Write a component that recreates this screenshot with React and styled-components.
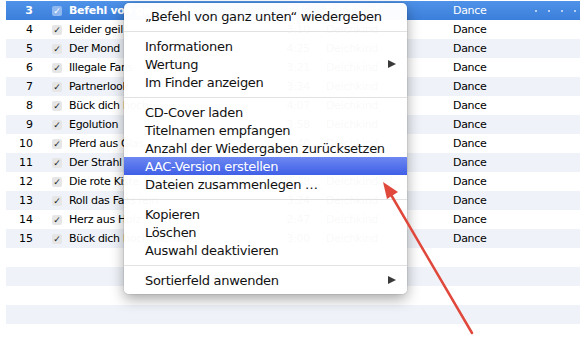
import styled, { createGlobalStyle } from "styled-components";

const GlobalStyle = createGlobalStyle`
  html, body {
    margin: 0;
    padding: 0;
    background: #ffffff;
  }
  body {
    font-family: "DejaVu Sans", "Liberation Sans", sans-serif;
  }
`;

const Screen = styled.div`
  position: relative;
  width: 580px;
  height: 343px;
  overflow: hidden;
  background: #ffffff;
`;

const Table = styled.div`
  display: flex;
  flex-direction: column;
  padding: 1px 0 0 6px;
`;

// Nummer | Haken | Titel | Zeit | Interpret | Genre
const Row = styled.div`
  display: grid;
  grid-template-columns: 27px 19px 10px 7px 200px 41px 16px 127px 1fr;
  align-items: center;
  height: 19px;
  font-size: 11px;
  letter-spacing: -0.3px;
  color: ${(p) => (p.$selected ? "#ffffff" : "#000000")};
  background: ${(p) =>
    p.$selected
      ? "linear-gradient(#4f92e8, #3b7fdb)"
      : p.$striped
      ? "#eff3f9"
      : "#ffffff"};
  white-space: nowrap;
`;

const Num = styled.div`
  grid-column: 1;
  text-align: right;
  letter-spacing: 0;
  font-weight: ${(p) => (p.$selected ? "bold" : "normal")};
`;

const Check = styled.div`
  grid-column: 3;
  width: 10px;
  height: 10px;
  border-radius: 2px;
  background: ${(p) => (p.$selected ? "#8fb8f0" : "#e6e6e6")};
  color: ${(p) => (p.$selected ? "#ffffff" : "#222222")};
  font-size: 9px;
  font-weight: bold;
  line-height: 10px;
  text-align: center;
  letter-spacing: 0;
`;

const Title = styled.div`
  grid-column: 5;
  overflow: hidden;
  font-weight: ${(p) => (p.$selected ? "bold" : "normal")};
`;

const Time = styled.div`
  grid-column: 6;
  text-align: right;
`;

const Artist = styled.div`
  grid-column: 8;
  overflow: hidden;
`;

const Genre = styled.div`
  grid-column: 9;
  display: flex;
  align-items: center;
  justify-content: space-between;
  padding-right: 4px;
`;

const Dots = styled.div`
  display: flex;
  gap: 11px;
`;

const Dot = styled.span`
  width: 2px;
  height: 2px;
  border-radius: 1px;
  background: rgba(255, 255, 255, 0.8);
`;

const Menu = styled.div`
  position: absolute;
  left: 124px;
  top: 3px;
  width: 283px;
  padding: 4px 0 5px;
  background: rgba(255, 255, 255, 0.975);
  border-radius: 5px;
  box-shadow: 0 5px 14px rgba(0, 0, 0, 0.35), 0 0 0 1px rgba(0, 0, 0, 0.06);
  font-size: 13px;
  letter-spacing: -0.3px;
  color: #111111;
`;

const Item = styled.div`
  display: flex;
  align-items: center;
  justify-content: space-between;
  height: 18px;
  padding: 0 11px 0 21px;
  color: ${(p) => (p.$active ? "#ffffff" : "#111111")};
  background: ${(p) =>
    p.$active ? "linear-gradient(#6d88f2, #3f5fe6)" : "transparent"};
  white-space: nowrap;
`;

const Separator = styled.div`
  height: 1px;
  margin: 6px 0 5px;
  background: #e2e2e2;
`;

const SubArrow = styled.span`
  width: 0;
  height: 0;
  border-top: 4.5px solid transparent;
  border-bottom: 4.5px solid transparent;
  border-left: 8px solid #3a3a3a;
`;

const Pointer = styled.svg`
  position: absolute;
  left: 0;
  top: 0;
`;

const tracks = [
  ["3", "Befehl von ganz unten", "3:45"],
  ["4", "Leider geil", "3:10"],
  ["5", "Der Mond", "4:25"],
  ["6", "Illegale Fans", "3:21"],
  ["7", "Partnerlook", "3:34"],
  ["8", "Bück dich hoch", "4:07"],
  ["9", "Egolution", "3:58"],
  ["10", "Pferd aus Glas", "3:40"],
  ["11", "Der Strahl", "3:12"],
  ["12", "Die rote Kiste", "3:28"],
  ["13", "Roll das Fass rein", "3:24"],
  ["14", "Herz aus Holz", "2:47"],
  ["15", "Bück dich hoch (Remix)", "3:00"],
];

const menu = [
  { label: "„Befehl von ganz unten“ wiedergeben" },
  "sep",
  { label: "Informationen" },
  { label: "Wertung", sub: true },
  { label: "Im Finder anzeigen" },
  "sep",
  { label: "CD-Cover laden" },
  { label: "Titelnamen empfangen" },
  { label: "Anzahl der Wiedergaben zurücksetzen" },
  { label: "AAC-Version erstellen", active: true },
  { label: "Dateien zusammenlegen …" },
  "sep",
  { label: "Kopieren" },
  { label: "Löschen" },
  { label: "Auswahl deaktivieren" },
  "sep",
  { label: "Sortierfeld anwenden", sub: true },
];

export default function App() {
  const empty = [16, 17, 18, 19, 20];
  return (
    <Screen>
      <GlobalStyle />
      <Table>
        {tracks.map(([n, title, time], i) => {
          const selected = i === 0;
          return (
            <Row key={n} $selected={selected} $striped={i % 2 === 0}>
              <Num $selected={selected}>{n}</Num>
              <Check $selected={selected}>✓</Check>
              <Title $selected={selected}>{title}</Title>
              <Time>{time}</Time>
              <Artist>Deichkind</Artist>
              <Genre>
                Dance
                {selected && (
                  <Dots>
                    <Dot />
                    <Dot />
                    <Dot />
                    <Dot />
                  </Dots>
                )}
              </Genre>
            </Row>
          );
        })}
        {empty.map((n) => (
          <Row key={n} $striped={n % 2 === 1} />
        ))}
      </Table>

      <Menu>
        {menu.map((m, i) =>
          m === "sep" ? (
            <Separator key={i} />
          ) : (
            <Item key={i} $active={m.active}>
              {m.label}
              {m.sub && <SubArrow />}
            </Item>
          )
        )}
      </Menu>

      <Pointer width="580" height="343" viewBox="0 0 580 343">
        <line
          x1="472"
          y1="333"
          x2="390"
          y2="193"
          stroke="#e0483c"
          strokeWidth="2.5"
          strokeLinecap="round"
        />
        <polygon points="383,182 398,192 387,199" fill="#e0483c" />
      </Pointer>
    </Screen>
  );
}
